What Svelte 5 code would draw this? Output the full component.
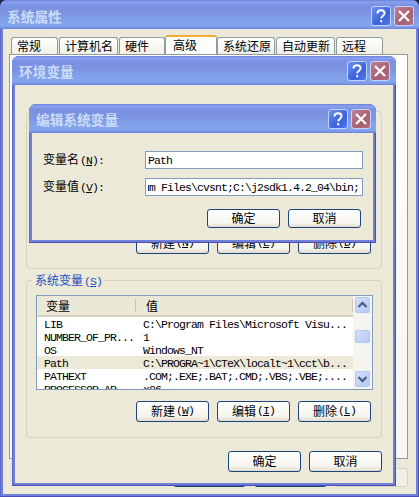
<script>
  const tabs = [
    { name: '常规', w: 47 },
    { name: '计算机名', w: 59 },
    { name: '硬件', w: 46 },
    { name: '高级', w: 52, active: true },
    { name: '系统还原', w: 58 },
    { name: '自动更新', w: 59 },
    { name: '远程', w: 47 },
  ];
  const rows = [
    ['LIB', 'C:\\Program Files\\Microsoft Visu...'],
    ['NUMBER_OF_PR...', '1'],
    ['OS', 'Windows_NT'],
    ['Path', 'C:\\PROGRA~1\\CTeX\\localt~1\\cct\\b...'],
    ['PATHEXT', '.COM;.EXE;.BAT;.CMD;.VBS;.VBE;....'],
    ['PROCESSOR_AR', 'x86'],
  ];
  const userButtons = [['新建', 'N'], ['编辑', 'E'], ['删除', 'D']];
  const systemButtons = [['新建', 'W'], ['编辑', 'I'], ['删除', 'L']];
</script>

{#snippet titlebar(title)}
  <header class="titlebar">
    <span class="title">{title}</span>
    <span class="cap help">
      <svg width="18" height="18" viewBox="0 0 18 18"><path d="M5.4 6.5C5.5 4.2 7 3.2 9 3.2S12.6 4.4 12.6 6.3C12.6 8.7 9.2 8.7 9.2 11.6M9.2 13V15.2" fill="none" stroke="#fff" stroke-width="2" /></svg>
    </span>
    <span class="cap close">
      <svg width="18" height="18" viewBox="0 0 18 18"><path d="M4 4L14 14M14 4L4 14" fill="none" stroke="#fff" stroke-width="2.2" /></svg>
    </span>
  </header>
{/snippet}

{#snippet key(k)}<span class="mono key">(<u>{k}</u>)</span>{/snippet}

{#snippet button(label, k)}
  <button class="btn"><span>{label}</span>{#if k}{@render key(k)}{/if}</button>
{/snippet}

<div class="desktop">
  <section class="window props">
    {@render titlebar('系统属性')}
    <div class="body">
      <nav class="tabs">
        {#each tabs as t}
          <span class="tab" class:active={t.active} style="width:{t.w}px">{t.name}</span>
        {/each}
      </nav>
      <div class="page"></div>
      <div class="foot">
        <button class="btn"></button>
        <button class="btn"></button>
        <button class="btn disabled"></button>
      </div>
    </div>
  </section>

  <section class="window env">
    {@render titlebar('环境变量')}
    <div class="body">
      <div class="group user">
        <div class="buttons">
          {#each userButtons as [l, k]}{@render button(l, k)}{/each}
        </div>
      </div>
      <div class="group system">
        <span class="legend">系统变量{@render key('S')}</span>
        <div class="list">
          <div class="table">
            <div class="head"><span class="c1">变量</span><span class="c2">值</span></div>
            {#each rows as [name, value], i}
              <div class="row mono" class:selected={i === 3}>
                <span class="c1">{name}</span><span class="c2">{value}</span>
              </div>
            {/each}
          </div>
          <div class="scroll">
            <span class="arrow"><svg width="15" height="16" viewBox="0 0 15 16"><path d="M3.5 10L7.5 6L11.5 10" fill="none" stroke="#4d6185" stroke-width="2.3" /></svg></span>
            <span class="thumb"></span>
            <span class="arrow"><svg width="15" height="16" viewBox="0 0 15 16"><path d="M3.5 6L7.5 10L11.5 6" fill="none" stroke="#4d6185" stroke-width="2.3" /></svg></span>
          </div>
        </div>
        <div class="buttons">
          {#each systemButtons as [l, k]}{@render button(l, k)}{/each}
        </div>
      </div>
      <div class="buttons confirm">
        {@render button('确定')}{@render button('取消')}
      </div>
    </div>
  </section>

  <section class="window edit">
    {@render titlebar('编辑系统变量')}
    <div class="body">
      <div class="field"><span class="label">变量名{@render key('N')}<span class="mono">:</span></span><span class="input mono"><span>Path</span></span></div>
      <div class="field"><span class="label">变量值{@render key('V')}<span class="mono">:</span></span><span class="input mono"><span class="scrolled"><span>um Files\cvsnt;C:\j2sdk1.4.2_04\bin;</span></span></span></div>
      <div class="buttons">
        {@render button('确定')}{@render button('取消')}
      </div>
    </div>
  </section>
</div>

<style>
  .desktop, .desktop * { box-sizing: border-box; }
  .desktop {
    position: relative; width: 419px; height: 497px; overflow: hidden;
    background: #1c2848; color: #000;
    font: 12px/14px "Noto Sans CJK SC", sans-serif;
  }
  .mono {
    font-family: "Liberation Mono", "Noto Sans CJK SC", monospace;
    font-size: 11.5px; letter-spacing: -0.9px; white-space: pre;
  }
  .window {
    position: absolute; display: flex; flex-direction: column;
    background: #727fd8; border-radius: 7px 7px 0 0; padding: 0 3px 3px; overflow: hidden;
    box-shadow: inset -1px -1px #4a4fb5, inset 1px 0 #6068c5;
  }
  .props { left: 0; top: 0; width: 419px; height: 497px; }
  .env { left: 12px; top: 56px; width: 384px; height: 430px; }
  .edit { left: 29px; top: 104px; width: 347px; height: 139px; }
  .body { flex: 1; min-height: 0; background: #ece9d8; display: flex; flex-direction: column; }

  .titlebar {
    flex: none; height: 29px; margin: 0 -3px; padding: 1px 5px 1px 7px;
    display: flex; align-items: center; gap: 3px;
    background: linear-gradient(#6a7fdc 0, #8aa2ee 2px, #7a92e4 5px, #7b93e0 13px, #82a2ea 20px, #83a5ee 26px, #6d83d8 29px);
  }
  .title { flex: 1; color: #cbdcf6; font-size: 13.7px; font-weight: 700; line-height: 18px; }
  .cap {
    width: 20px; height: 20px; border: 1px solid #c3d2f7; border-radius: 3px;
    display: flex; align-items: center; justify-content: center;
  }
  .help { background: linear-gradient(135deg, #6d92f0, #3c61dc 60%, #4d78ec); }
  .close { background: linear-gradient(135deg, #bd8294, #a9606f 60%, #b06f82); }
  .props .titlebar { padding-top: 3px; }
  .env .titlebar { padding-right: 6px; }
  .edit .titlebar { padding-top: 2px; }

  .tabs { flex: none; display: flex; align-items: flex-end; height: 25px; padding-left: 8px; gap: 1px; }
  .tab {
    flex: none; height: 17px; border: 1px solid #919b9c; border-bottom: 0; border-radius: 3px 3px 0 0;
    background: linear-gradient(#fff, #f1f0e8); padding-left: 5px; line-height: 16px; white-space: nowrap;
  }
  .tab.active {
    height: 19px; background: #fdfdfb; border-top: 2px solid #f0ab30; padding-left: 7px; line-height: 15px;
    margin: 0 -1px;
  }
  .page {
    flex: none; margin: 0 8px 0 6px; height: 405px;
    border: 1px solid #919b9c; background: linear-gradient(#fefefe, #f6f5f0);
  }
  .foot { display: flex; gap: 8px; justify-content: flex-end; padding: 9px 8px 0 0; }
  .foot .btn { height: 19px; }
  .foot .btn.disabled { border-color: #d5d2c3; background: #f2f0e6; }

  .btn {
    flex: none; width: 73px; height: 21px; padding: 0 0 2px; border: 1px solid #1c4478; border-radius: 3px;
    background: linear-gradient(#fff, #f5f4ee 75%, #dfdbcd); color: #000;
    font: inherit; line-height: 16px; display: flex; align-items: center; justify-content: center;
  }
  .key { margin-left: 1px; }
  .key u { text-underline-offset: 1px; }
  .buttons { display: flex; gap: 8px; justify-content: flex-end; }

  .group { flex: none; border: 1px solid #d5d2c1; border-radius: 4px; margin: 0 11px; }
  .user { margin-top: 26px; height: 158px; padding: 121px 10px 0 0; }
  .system { margin-top: 11px; height: 158px; display: flex; flex-direction: column; }
  .legend {
    align-self: flex-start; height: 15px; margin: -9px 0 0 5px; padding: 0 3px; line-height: 15px;
    background: #ece9d8; color: #1f4ec2;
  }
  .list {
    flex: none; width: 337px; height: 95px; margin: 8px 0 0 9px; border: 1px solid #7f9db9; background: #fff;
    display: flex; overflow: hidden;
  }
  .table { flex: 1; min-width: 0; height: 93px; overflow: hidden; }
  .head { display: flex; height: 21px; background: #ebe8d8; border-bottom: 2px solid #d5d1bf; }
  .head .c1 { width: 99px; padding-left: 9px; border-right: 1px solid #c7c4b3; margin: 3px 0; line-height: 14px; }
  .head .c2 { flex: 1; padding-left: 10px; border-right: 1px solid #c7c4b3; margin: 3px 0; line-height: 14px; }
  .row { display: flex; height: 13px; line-height: 15px; }
  .row .c1 { flex: none; width: 99px; padding-left: 7px; }
  .row .c2 { padding-left: 7px; }
  .selected { background: #ece9d8; }
  .scroll { flex: none; width: 19px; padding: 1px 2px 1px 1px; background: #f5f4ee; display: flex; flex-direction: column; align-items: flex-end; }
  .arrow, .thumb {
    width: 15px; height: 16px; border-radius: 2px; background: linear-gradient(135deg, #d3dffd, #b5c8f7);
    border: 1px solid #b3c6f0; display: flex; align-items: center; justify-content: center;
  }
  .arrow svg { flex: none; }
  .thumb { margin: 17px 0 28px; height: 13px; flex: none; }
  .system .buttons { margin: 11px 10px 0 0; }
  .confirm { margin: 13px 11px 0 0; }

  .field { display: flex; align-items: center; height: 18px; margin-left: 11px; }
  .label { width: 102px; white-space: nowrap; }
  .input {
    width: 218px; height: 18px; border: 1px solid #7f9db9; background: #fff; padding: 0 2px;
    line-height: 17px; overflow: hidden; display: flex;
  }
  .scrolled { flex: 1; min-width: 0; overflow: hidden; display: flex; justify-content: flex-end; padding-right: 1px; }
  .edit .body { padding-top: 18px; }
  .field + .field { margin-top: 9px; }
  .edit .buttons { margin: 13px 12px 0 0; }
  .edit .btn { height: 19px; }
</style>
